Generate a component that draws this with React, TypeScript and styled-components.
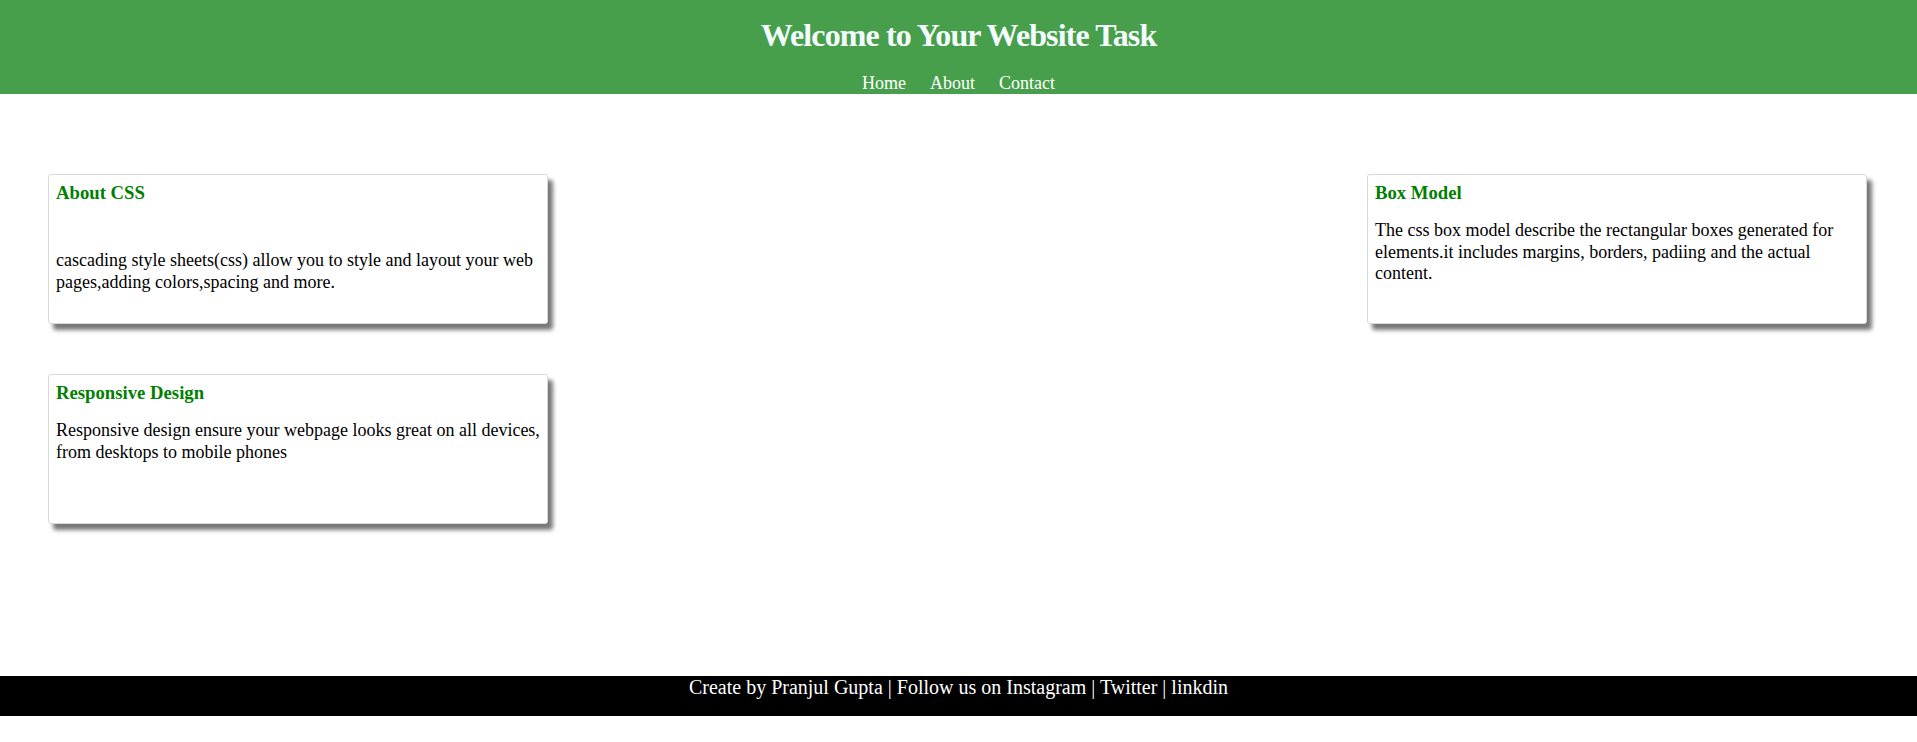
import React from "react";
import styled, { createGlobalStyle } from "styled-components";

const GlobalStyle = createGlobalStyle`
  html, body {
    margin: 0;
    padding: 0;
    background: #ffffff;
    font-family: "Liberation Serif", "Times New Roman", serif;
  }
`;

const Page = styled.div`
  display: flex;
  flex-direction: column;
  min-height: 742px;
`;

const Header = styled.header`
  background: #489f4b;
  height: 94px;
  box-sizing: border-box;
  padding-top: 17px;
  display: flex;
  flex-direction: column;
  align-items: center;
`;

const Title = styled.h1`
  margin: 0 0 19px;
  font-size: 32px;
  line-height: 37px;
  font-weight: bold;
  letter-spacing: -0.9px;
  color: #f4fbff;
`;

const Nav = styled.nav`
  display: flex;
  gap: 24px;
`;

const NavLink = styled.a`
  color: #ffffff;
  text-decoration: none;
  font-size: 18px;
  line-height: 21px;
`;

const Main = styled.main`
  height: 582px;
  box-sizing: border-box;
  padding: 80px 50px 0 48px;
  display: grid;
  grid-template-columns: 500px 1fr 500px;
  grid-auto-rows: 150px;
  row-gap: 50px;
  align-content: start;
`;

const Card = styled.section<{ $col: number; $row: number }>`
  grid-column: ${(p) => p.$col};
  grid-row: ${(p) => p.$row};
  box-sizing: border-box;
  height: 150px;
  background: #ffffff;
  border: 1px solid #d9d9d9;
  border-radius: 3px;
  padding: 7px 6px 7px 7px;
  box-shadow: 5px 6px 4px #787878;
`;

const CardTitle = styled.h3`
  margin: 0;
  font-size: 18.72px;
  line-height: 22px;
  font-weight: bold;
  color: #008000;
`;

const CardText = styled.p<{ $gap: number }>`
  margin: ${(p) => p.$gap}px 0 0;
  font-size: 18px;
  line-height: 21.5px;
  color: #000000;
`;

const Footer = styled.footer`
  background: #000000;
  height: 40px;
  color: #ffffff;
  font-size: 20px;
  line-height: 23px;
  text-align: center;
`;

const cards = [
  {
    title: "About CSS",
    text: "cascading style sheets(css) allow you to style and layout your web pages,adding colors,spacing and more.",
    col: 1,
    row: 1,
    gap: 46,
  },
  {
    title: "Box Model",
    text: "The css box model describe the rectangular boxes generated for elements.it includes margins, borders, padiing and the actual content.",
    col: 3,
    row: 1,
    gap: 16,
  },
  {
    title: "Responsive Design",
    text: "Responsive design ensure your webpage looks great on all devices, from desktops to mobile phones",
    col: 1,
    row: 2,
    gap: 16,
  },
];

export default function App() {
  return (
    <>
      <GlobalStyle />
      <Page>
        <Header>
          <Title>Welcome to Your Website Task</Title>
          <Nav>
            <NavLink href="#">Home</NavLink>
            <NavLink href="#">About</NavLink>
            <NavLink href="#">Contact</NavLink>
          </Nav>
        </Header>
        <Main>
          {cards.map((c) => (
            <Card key={c.title} $col={c.col} $row={c.row}>
              <CardTitle>{c.title}</CardTitle>
              <CardText $gap={c.gap}>{c.text}</CardText>
            </Card>
          ))}
        </Main>
        <Footer>Create by Pranjul Gupta | Follow us on Instagram | Twitter | linkdin</Footer>
      </Page>
    </>
  );
}
